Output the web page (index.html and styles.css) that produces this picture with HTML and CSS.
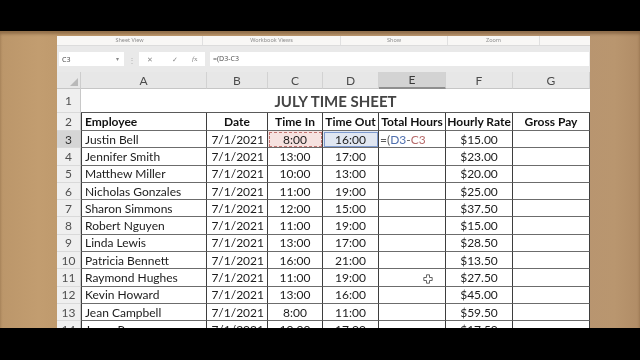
FILE: index.html
```html
<!DOCTYPE html>
<html>
<head>
<meta charset="utf-8">
<link rel="stylesheet" href="styles.css">
</head>
<body>
<div class="bar-top"></div>
<div class="stage">
  <div class="window">
    <div class="ribbon">
      <div class="grp g1">Sheet View</div>
      <div class="grp g2">Workbook Views</div>
      <div class="grp g3">Show</div>
      <div class="grp g4">Zoom</div>
      <div class="grp g5"></div>
    </div>
    <div class="fbar">
      <div class="namebox"><span>C3</span><span class="dd">▾</span></div>
      <div class="fsep">⋮</div>
      <div class="fbtns"><span class="fb-x">✕</span><span class="fb-ok">✓</span><span class="fb-fx"><i>f</i>x</span></div>
      <div class="finput">=(D3-C3</div>
    </div>
    <div class="sheet">
      <div class="corner"><svg width="8" height="8" viewBox="0 0 8 8"><polygon points="8,0 8,8 0,8" fill="#b9b9b9"/></svg></div>
      <div class="ch">A</div><div class="ch">B</div><div class="ch">C</div><div class="ch">D</div><div class="ch sel">E</div><div class="ch">F</div><div class="ch">G</div>

      <div class="rh">1</div>
      <div class="title">JULY TIME SHEET</div>

      <div class="rh">2</div>
      <div class="c first hd">Employee</div><div class="c hd ctr">Date</div><div class="c hd ctr">Time In</div><div class="c hd ctr">Time Out</div><div class="c hd ctr">Total Hours</div><div class="c hd ctr">Hourly Rate</div><div class="c hd ctr">Gross Pay</div>

      <div class="rh sel">3</div>
      <div class="c first">Justin Bell</div><div class="c rt">7/1/2021</div><div class="c ctr refc">8:00</div><div class="c ctr refd">16:00</div><div class="c edit">=(<span class="kd">D3</span>-<span class="kc">C3</span></div><div class="c ctr">$15.00</div><div class="c"></div>

      <div class="rh">4</div>
      <div class="c first">Jennifer Smith</div><div class="c rt">7/1/2021</div><div class="c ctr">13:00</div><div class="c ctr">17:00</div><div class="c"></div><div class="c ctr">$23.00</div><div class="c"></div>

      <div class="rh">5</div>
      <div class="c first">Matthew Miller</div><div class="c rt">7/1/2021</div><div class="c ctr">10:00</div><div class="c ctr">13:00</div><div class="c"></div><div class="c ctr">$20.00</div><div class="c"></div>

      <div class="rh">6</div>
      <div class="c first">Nicholas Gonzales</div><div class="c rt">7/1/2021</div><div class="c ctr">11:00</div><div class="c ctr">19:00</div><div class="c"></div><div class="c ctr">$25.00</div><div class="c"></div>

      <div class="rh">7</div>
      <div class="c first">Sharon Simmons</div><div class="c rt">7/1/2021</div><div class="c ctr">12:00</div><div class="c ctr">15:00</div><div class="c"></div><div class="c ctr">$37.50</div><div class="c"></div>

      <div class="rh">8</div>
      <div class="c first">Robert Nguyen</div><div class="c rt">7/1/2021</div><div class="c ctr">11:00</div><div class="c ctr">19:00</div><div class="c"></div><div class="c ctr">$15.00</div><div class="c"></div>

      <div class="rh">9</div>
      <div class="c first">Linda Lewis</div><div class="c rt">7/1/2021</div><div class="c ctr">13:00</div><div class="c ctr">17:00</div><div class="c"></div><div class="c ctr">$28.50</div><div class="c"></div>

      <div class="rh">10</div>
      <div class="c first">Patricia Bennett</div><div class="c rt">7/1/2021</div><div class="c ctr">16:00</div><div class="c ctr">21:00</div><div class="c"></div><div class="c ctr">$13.50</div><div class="c"></div>

      <div class="rh">11</div>
      <div class="c first">Raymond Hughes</div><div class="c rt">7/1/2021</div><div class="c ctr">11:00</div><div class="c ctr">19:00</div><div class="c"></div><div class="c ctr">$27.50</div><div class="c"></div>

      <div class="rh">12</div>
      <div class="c first">Kevin Howard</div><div class="c rt">7/1/2021</div><div class="c ctr">13:00</div><div class="c ctr">16:00</div><div class="c"></div><div class="c ctr">$45.00</div><div class="c"></div>

      <div class="rh">13</div>
      <div class="c first">Jean Campbell</div><div class="c rt">7/1/2021</div><div class="c ctr">8:00</div><div class="c ctr">11:00</div><div class="c"></div><div class="c ctr">$59.50</div><div class="c"></div>

      <div class="rh">14</div>
      <div class="c first">Jason Rogers</div><div class="c rt">7/1/2021</div><div class="c ctr">10:00</div><div class="c ctr">17:00</div><div class="c"></div><div class="c ctr">$17.50</div><div class="c"></div>

      <svg class="cursor" width="10" height="10" viewBox="0 0 10 10"><path d="M3.5 0.8h3v2.7h2.7v3H6.5v2.7h-3V6.5H0.8v-3h2.7z" fill="#fff" stroke="#555" stroke-width="0.9" stroke-linejoin="round"/></svg>
    </div>
  </div>
</div>
<div class="bar-bottom"></div>
</body>
</html>
```

FILE: styles.css
```css
html, body {
  margin: 0;
  padding: 0;
}
body {
  width: 640px;
  height: 360px;
  overflow: hidden;
  background: #000;
  font-family: Lato, "Noto Sans", sans-serif;
}
.bar-top {
  height: 31px;
  background: #000;
}
.bar-bottom {
  height: 32px;
  background: #000;
}
.stage {
  box-sizing: border-box;
  height: 297px;
  overflow: hidden;
  padding: 5px 50px 0 57px;
  background: linear-gradient(90deg, #bb966a 0%, #c29d70 6%, #bf9a6d 9%, #b89570 91%, #b9966f 96%, #b08c66 100%);
  box-shadow: inset 0 3px 3px rgba(90, 60, 30, 0.45);
}
.window {
  width: 533px;
  height: 292px;
  background: #e9e9e9;
  filter: blur(0.3px);
}

/* ribbon group labels */
.ribbon {
  display: flex;
  height: 9px;
  background: #f8f7f5;
  border-bottom: 1px solid #dcdcdc;
  font-family: "Noto Sans", sans-serif;
  font-size: 5.5px;
  line-height: 9px;
  color: #8c8c8c;
}
.grp {
  box-sizing: border-box;
  text-align: center;
  border-right: 1px solid #e0e0e0;
}
.g1 { width: 146px; }
.g2 { width: 138px; }
.g3 { width: 107px; }
.g4 { width: 92px; }
.g5 { width: 50px; border-right: none; }

/* formula bar */
.fbar {
  display: flex;
  align-items: center;
  height: 26px;
  font-family: "Noto Sans", sans-serif;
  font-size: 7px;
  color: #4a4a4a;
}
.namebox {
  box-sizing: border-box;
  margin-left: 2px;
  width: 65px;
  height: 14px;
  background: #fff;
  display: flex;
  align-items: center;
  justify-content: space-between;
  padding: 0 5px 0 3px;
}
.dd {
  font-size: 6px;
  color: #888;
}
.fsep {
  width: 15px;
  text-align: center;
  color: #b0b0b0;
  font-size: 8px;
}
.fbtns {
  box-sizing: border-box;
  width: 66px;
  height: 14px;
  background: #fff;
  display: flex;
  align-items: center;
  padding-left: 8px;
  color: #8a8a8a;
}
.fb-x { width: 25px; font-size: 7px; }
.fb-ok { width: 20px; font-size: 7px; }
.fb-fx { font-family: "Liberation Serif", serif; font-size: 7px; }
.finput {
  box-sizing: border-box;
  margin-left: 5px;
  width: 379px;
  height: 14px;
  line-height: 14px;
  background: #fff;
  padding-left: 3px;
  color: #555;
}

/* sheet grid */
.sheet {
  position: relative;
  display: grid;
  grid-template-columns: 24px 126px 61px 55px 56px 67px 67px 77px;
  grid-template-rows: 17px 24px 18px repeat(12, 17.3px);
  background: #fff;
  font-size: 12px;
  color: #1c1c1c;
}
.sheet > div {
  box-sizing: border-box;
  display: flex;
  align-items: center;
  overflow: hidden;
  white-space: nowrap;
}
.corner {
  background: #e7e7e7;
  border-right: 1px solid #cdcdcd;
  border-bottom: 1px solid #c6c6c6;
  justify-content: flex-end;
  align-items: flex-end !important;
  padding: 0 2px 2px 0;
}
.ch {
  justify-content: center;
  background: #e7e7e7;
  border-right: 1px solid #d2d2d2;
  border-bottom: 1px solid #c6c6c6;
  color: #4c4c4c;
  font-size: 12px;
}
.ch.sel {
  background: #d3d3d3;
  border-bottom: 2px solid #8f8f8f;
  color: #3a3a3a;
}
.rh {
  justify-content: center;
  background: #efefef;
  border-right: 1px solid #c8c8c8;
  border-bottom: 1px solid #d9d9d9;
  color: #505050;
  font-size: 12px;
}
.rh.sel {
  background: #d5d5d5;
  color: #333;
}
.title {
  grid-column: span 7;
  justify-content: center;
  border-bottom: 1px solid #5a5a5a;
  font-weight: 700;
  font-size: 15px;
  color: #454545;
}
.c {
  padding: 0 3px;
  border-right: 1px solid #3e3e3e;
  border-bottom: 1px solid #6c6c6c;
}
.c.first {
  border-left: 1px solid #3e3e3e;
}
.ctr { justify-content: center; }
.rt { justify-content: flex-end; }
.hd {
  font-weight: 700;
  color: #111;
}
.refc {
  background: #f6e2e0;
  outline: 1px dashed #c27471;
  outline-offset: -2px;
}
.refd {
  background: #e1e7f2;
  outline: 1px solid #7f9bcf;
  outline-offset: -2px;
}
.edit {
  color: #5a5a5a;
  padding-left: 1px;
}
.kd { color: #4f6fae; }
.kc { color: #b66b6b; }
.cursor {
  position: absolute;
  left: 366px;
  top: 202px;
}
```
